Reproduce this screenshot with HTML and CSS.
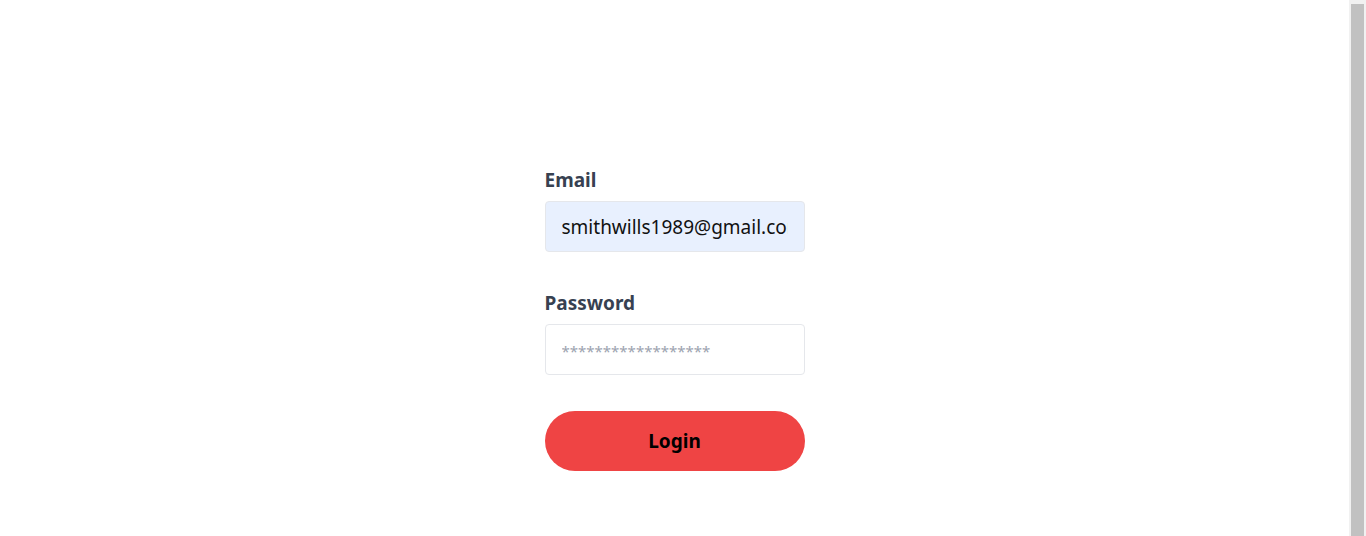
FILE: index.html
```html
<!DOCTYPE html>
<html lang="en">
<head>
<meta charset="utf-8">
<title>Login</title>
<link rel="stylesheet" href="styles.css">
</head>
<body>
<main class="page">
  <form class="login-form">
    <div class="field">
      <label class="field-label" for="email">Email</label>
      <input class="field-input field-input--filled" id="email" type="email" value="smithwills1989@gmail.com">
    </div>
    <div class="field">
      <label class="field-label" for="password">Password</label>
      <input class="field-input" id="password" type="password" placeholder="******************">
    </div>
    <button class="login-button" type="button">Login</button>
  </form>
</main>
<div class="scrollbar" aria-hidden="true"><div class="scrollbar-thumb"></div></div>
</body>
</html>
```
FILE: styles.css
```css
html, body {
  margin: 0;
  padding: 0;
  background: #ffffff;
}

body {
  font-family: "Noto Sans", "Open Sans", "Liberation Sans", sans-serif;
  overflow: hidden;
}

.page {
  display: flex;
  justify-content: center;
  margin-right: 17px;
  padding-top: 166px;
  padding-bottom: 40px;
}

.login-form {
  width: 260px;
  display: flex;
  flex-direction: column;
}

.field {
  display: flex;
  flex-direction: column;
  margin-bottom: 37px;
}

.field-label {
  font-size: 19px;
  line-height: 28px;
  font-weight: 700;
  color: #374151;
  margin-bottom: 7px;
}

.field-input {
  box-sizing: border-box;
  width: 260px;
  height: 51px;
  padding: 0 16px;
  border: 1px solid #e5e7eb;
  border-radius: 4px;
  background: #ffffff;
  font-family: inherit;
  font-size: 19px;
  color: #111111;
  outline: none;
}

.field-input--filled {
  background: #e8f0fe;
}

.field-input::placeholder {
  color: #9ca3af;
  font-size: 15px;
}

.login-button {
  height: 60px;
  width: 260px;
  margin-top: -1px;
  border: none;
  border-radius: 30px;
  background: #ef4444;
  color: #000000;
  font-family: inherit;
  font-size: 19px;
  font-weight: 700;
  cursor: pointer;
}

.scrollbar {
  position: fixed;
  top: 0;
  right: 0;
  bottom: 0;
  width: 17px;
  box-sizing: border-box;
  padding: 4px 2px 0 2px;
  background: #f1f1f1;
  display: flex;
}

.scrollbar-thumb {
  flex: 1;
  background: #c1c1c1;
}
```
